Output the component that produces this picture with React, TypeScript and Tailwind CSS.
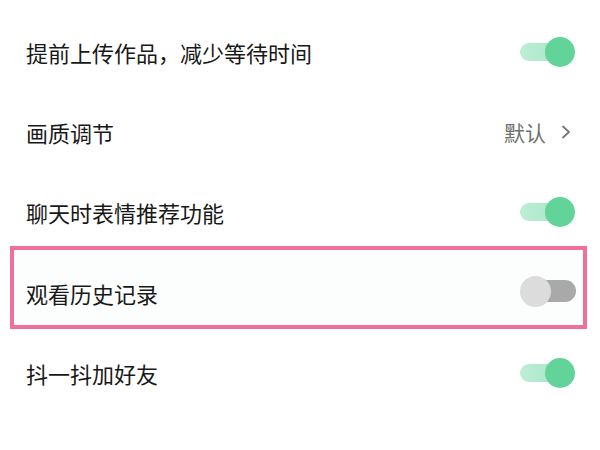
import { ReactNode } from "react";

function Toggle({ on }: { on: boolean }) {
  if (on) {
    return (
      <div className="relative w-[55px] h-[30px] shrink-0">
        <div className="absolute left-0 top-[6px] w-[46px] h-[18px] rounded-full bg-gradient-to-r from-[#bdeed6] to-[#a3e5c4]" />
        <div className="absolute right-0 top-0 w-[30px] h-[30px] rounded-full bg-[#62d49a]" />
      </div>
    );
  }
  return (
    <div className="relative w-[56px] h-[31px] shrink-0">
      <div className="absolute right-0 top-[4px] w-[42px] h-[22px] rounded-full bg-[#a9a9a9]" />
      <div className="absolute left-0 top-0 w-[31px] h-[31px] rounded-full bg-[#dcdcdc]" />
    </div>
  );
}

function Row({ label, right, className = "" }: { label: string; right: ReactNode; className?: string }) {
  return (
    <div className={`flex items-center justify-between ${className}`}>
      <span className="text-[22px] leading-none text-[#181818]">{label}</span>
      {right}
    </div>
  );
}

export default function App() {
  return (
    <div
      className="w-[600px] h-[450px] bg-white overflow-hidden pt-[12px]"
      style={{ fontFamily: '"Noto Sans CJK SC", "Noto Sans", sans-serif' }}
    >
      <Row className="h-[80px] pl-[26px] pr-[25px]" label="提前上传作品，减少等待时间" right={<Toggle on />} />
      <Row
        className="h-[80px] pl-[26px] pr-[29px]"
        label="画质调节"
        right={
          <div className="flex items-center gap-[15px] text-[#6f6f6f]">
            <span className="text-[21px] leading-none">默认</span>
            <svg width="10" height="14" viewBox="0 0 10 14" fill="none">
              <path d="M2 1.5 L8 7 L2 12.5" stroke="#777" strokeWidth="1.8" strokeLinecap="round" strokeLinejoin="round" />
            </svg>
          </div>
        }
      />
      <Row className="h-[80px] pl-[26px] pr-[25px]" label="聊天时表情推荐功能" right={<Toggle on />} />
      <div className="-mt-[6px] ml-[10px] mr-[13px] h-[83px] border-4 border-[#f0709a] bg-[#fcfdfd] flex items-center justify-between pl-[12px] pr-[7px] pt-[8px]">
        <span className="text-[22px] leading-none text-[#181818] mt-[3px]">观看历史记录</span>
        <Toggle on={false} />
      </div>
      <Row className="mt-[4px] h-[80px] pl-[26px] pr-[25px]" label="抖一抖加好友" right={<Toggle on />} />
    </div>
  );
}
